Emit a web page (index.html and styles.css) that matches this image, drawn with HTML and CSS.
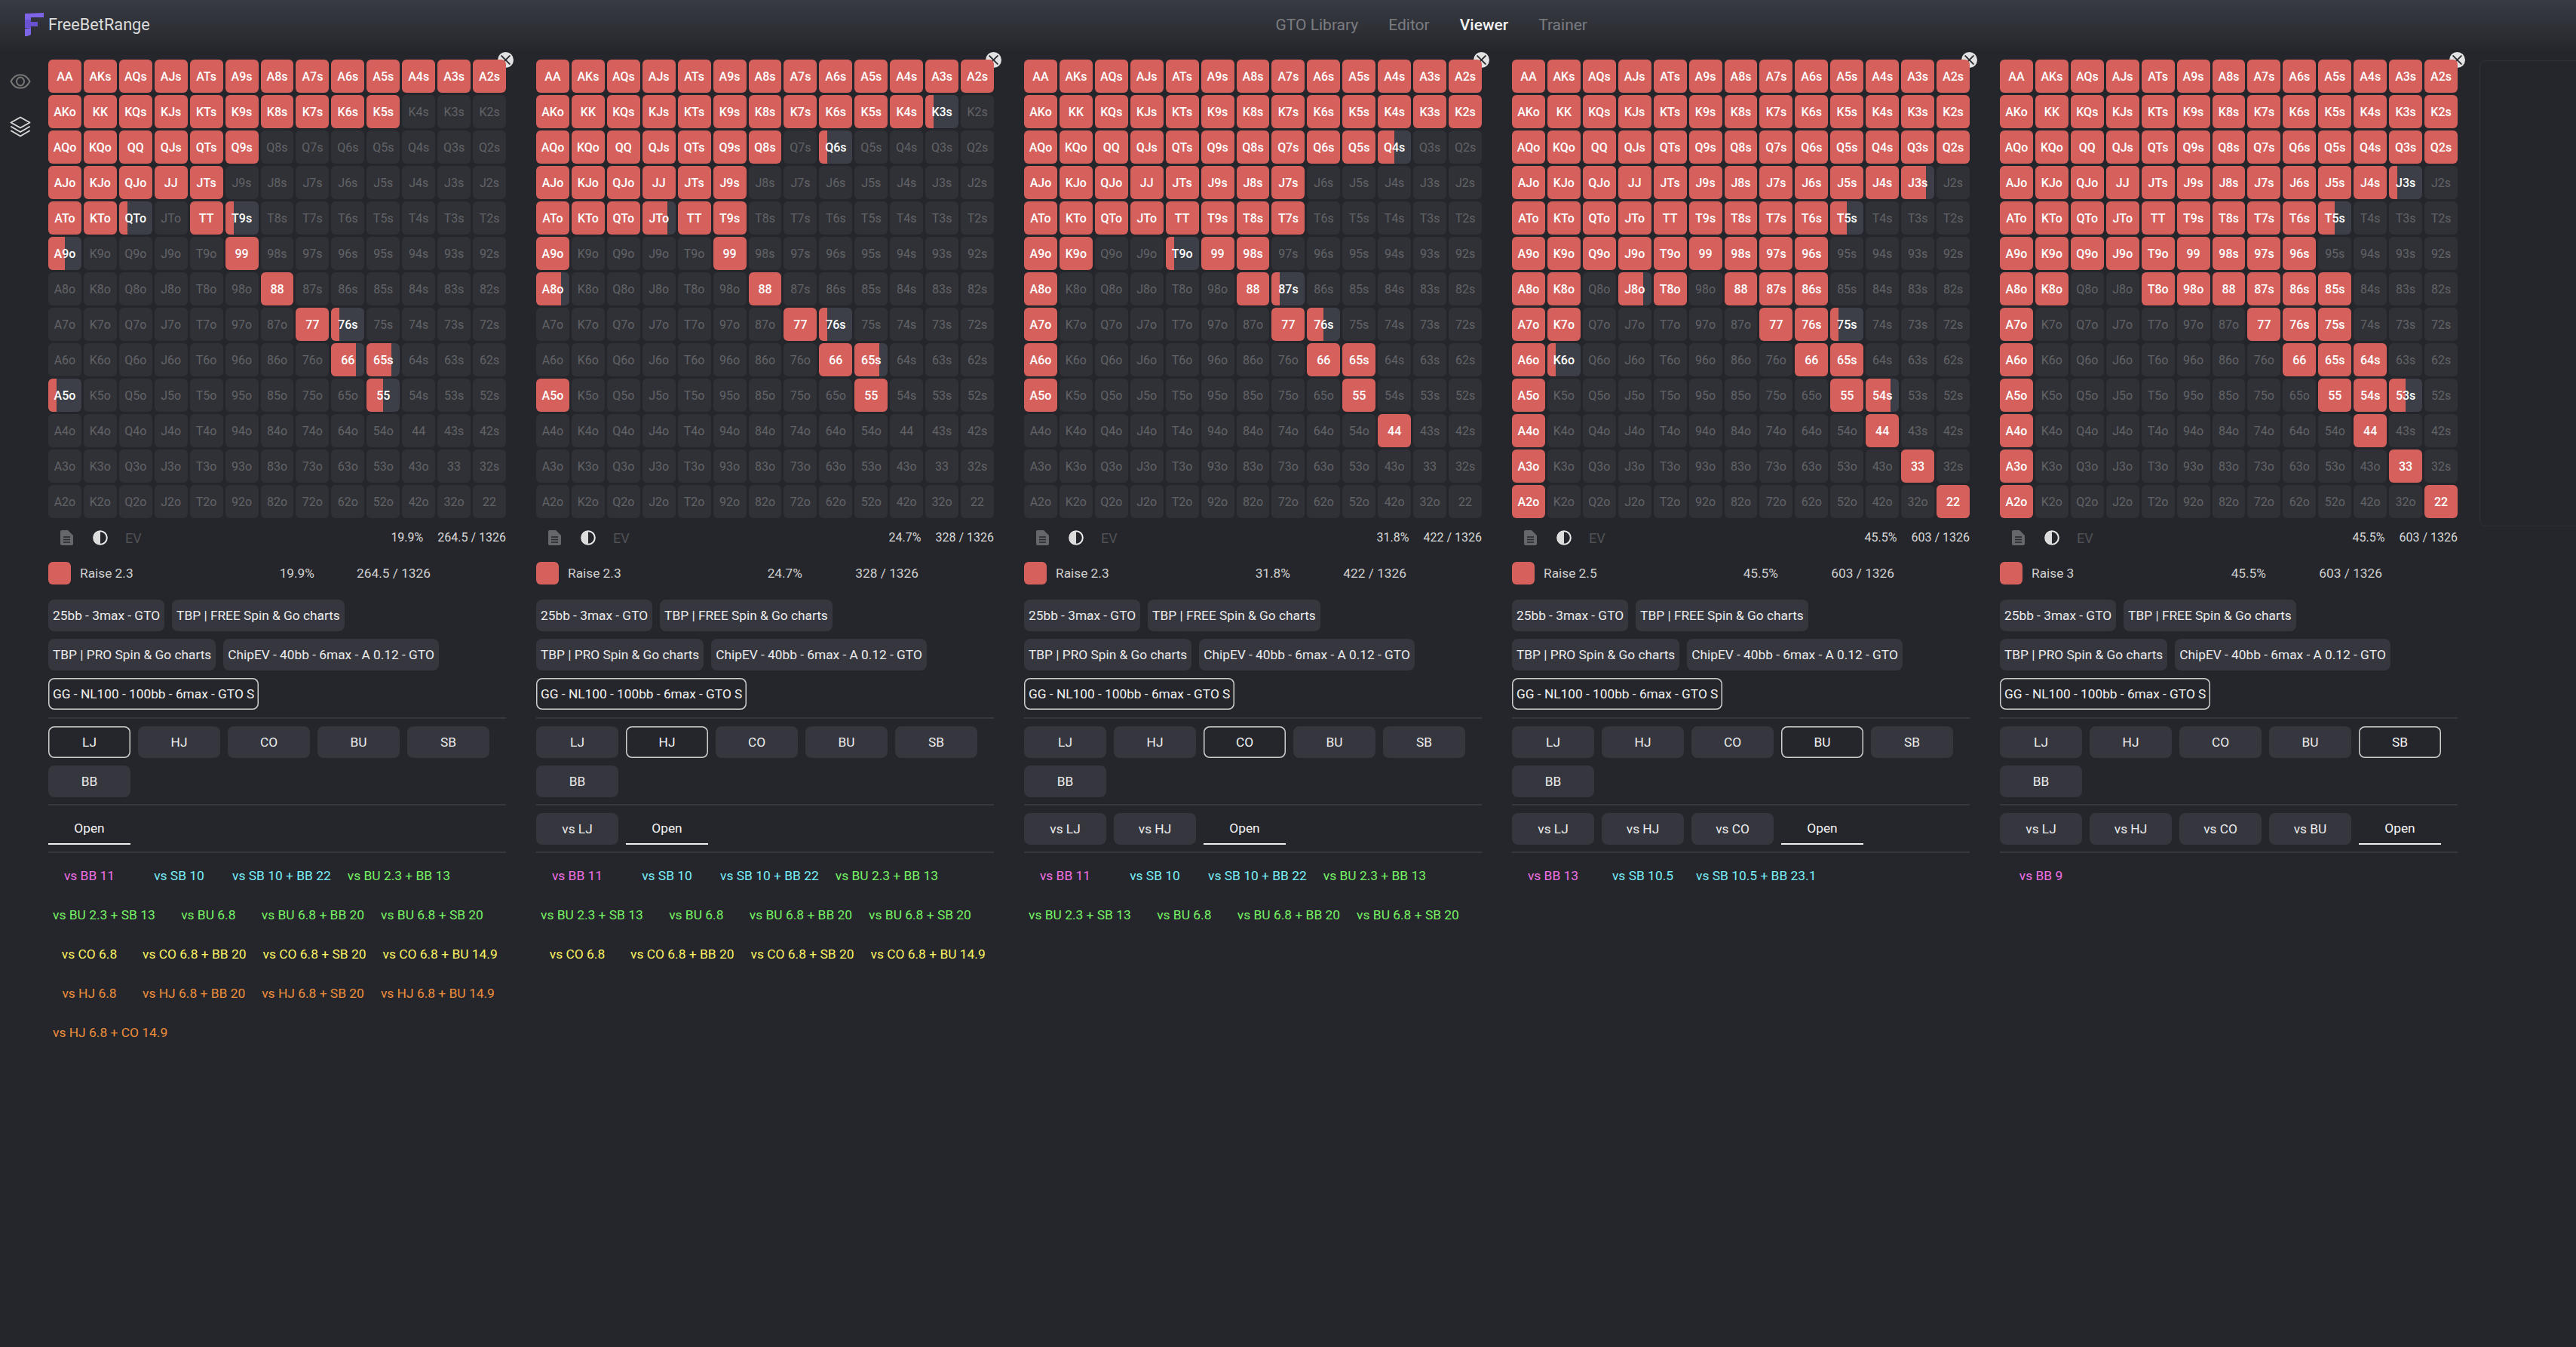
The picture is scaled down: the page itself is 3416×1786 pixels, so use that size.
FILE: index.html
```html
<!DOCTYPE html>
<html lang="en">
<head>
    <meta charset="UTF-8">
    <title>FreeBetRange - Viewer</title>
    <link rel="stylesheet" href="styles.css">
</head>
<body>
    <header class="topbar">
        <div class="brand">
            <svg class="brand-logo" viewBox="0 0 25 31" width="25" height="31">
                <polygon fill="#7d63e6" points="0,1 25,0 25,6 8,6 8,9 0,9"/>
                <polygon fill="#6a51cf" points="0,9 8,9 8,12 17,12 17,18 8,18 8,20 0,20"/>
                <polygon fill="#7d63e6" points="0,21 8,20 8,29 3,31 0,31"/>
            </svg>
            <span class="brand-name">FreeBetRange</span>
        </div>
        <nav class="nav">
            <a class="nav-link">GTO Library</a>
            <a class="nav-link">Editor</a>
            <a class="nav-link active">Viewer</a>
            <a class="nav-link">Trainer</a>
        </nav>
    </header>

    <div class="layout">
        <aside class="sidebar">
            <svg class="side-icon eye" viewBox="0 0 28 20" width="28" height="20" fill="none" stroke="#777" stroke-width="2">
                <path d="M1.5 10C4.5 4 9 1.2 14 1.2S23.500 4 26.500 10C23.500 16 19 18.800 14 18.800S4.500 16 1.500 10Z"/>
                <ellipse cx="14" cy="10" rx="5" ry="5.500"/>
            </svg>
            <svg class="side-icon layers" viewBox="0 0 28 28" width="28" height="28" fill="none" stroke="#d8d8d8" stroke-width="2" stroke-linejoin="round" stroke-linecap="round">
                <path d="M14 1.500L26.500 8.500L14 15.500L1.500 8.500Z"/>
                <path d="M2 14L14 21L26 14"/>
                <path d="M2 19.500L14 26.500L26 19.500"/>
            </svg>
        </aside>
        <main class="boards" id="boards"></main>
        <div class="side-box"></div>
    </div>

    <script src="app.js"></script>
</body>
</html>
```

FILE: styles.css
```css
* {
    box-sizing: border-box;
}
html, body {
    margin: 0;
    height: 100%;
    overflow: hidden;
}
body {
    background: #25262b;
    color: #e6e6e6;
    font-family: Roboto, "Noto Sans", sans-serif;
    font-size: 16px;
}

.topbar {
    height: 65px;
    display: flex;
    align-items: center;
    padding-left: 33px;
    background: linear-gradient(180deg, #383b44 0%, #27282d 100%);
}
.brand {
    display: flex;
    align-items: center;
    gap: 6px;
}
.brand-name {
    font-size: 21.700px;
    color: #dcdcdc;
}
.nav {
    display: flex;
    gap: 40px;
    margin-left: auto;
    margin-right: 1311px;
    font-size: 21px;
}
.nav-link {
    color: #7b7c80;
}
.nav-link.active {
    color: #f2f2f2;
    font-weight: 500;
}

.layout {
    display: flex;
    align-items: flex-start;
}
.sidebar {
    width: 64px;
    flex: none;
    display: flex;
    flex-direction: column;
    align-items: flex-start;
    padding: 33px 0 0 13px;
    gap: 36px;
}
.side-icon {
    display: block;
}
.boards {
    display: flex;
    gap: 40px;
    padding-top: 14px;
    flex: none;
}
.side-box {
    flex: none;
    width: 400px;
    height: 618px;
    margin: 15px 0 0 29px;
    border: 1px solid #303136;
    border-radius: 8px;
}

.panel {
    position: relative;
    width: 607px;
    flex: none;
}
.close {
    position: absolute;
    top: -12px;
    right: -12px;
    width: 25px;
    height: 25px;
    border-radius: 50%;
    background: #e2e2e2;
    border: 2px solid #25262b;
    display: flex;
    align-items: center;
    justify-content: center;
}

.grid {
    display: grid;
    grid-template-columns: repeat(13, 1fr);
    grid-template-rows: repeat(13, 44px);
    gap: 3px;
}
.cell {
    position: relative;
    overflow: hidden;
    border-radius: 6px;
    background: #303136;
    color: #626367;
    display: flex;
    align-items: center;
    justify-content: center;
}
.cell.on {
    background: #d5605c;
    color: #fff;
    font-weight: 500;
}
.cell.part {
    background: #3c3f47;
    color: #fff;
    font-weight: 500;
}
.cell-fill {
    position: absolute;
    left: 0;
    top: 0;
    bottom: 0;
    background: #d5605c;
}
.cell-text {
    position: relative;
}

.stats {
    height: 24px;
    margin-top: 14px;
    display: flex;
    align-items: center;
    padding-left: 15px;
}
.stats-doc {
    margin-right: 26px;
}
.stats-half {
    margin-right: 23px;
}
.stats-ev {
    font-size: 18px;
    color: #505155;
}
.stats-num {
    margin-left: auto;
    display: flex;
    gap: 19px;
    color: #d8d8d8;
    margin-top: -2px;
}

.legend {
    width: 507px;
    margin-top: 20px;
    display: grid;
    grid-template-columns: 30px 1fr 100px 154px;
    align-items: center;
    font-size: 17.300px;
    color: #cfcfcf;
}
.legend-swatch {
    width: 30px;
    height: 30px;
    border-radius: 6px;
    background: #d5605c;
}
.legend-label {
    padding-left: 12px;
}
.legend-num {
    text-align: right;
}

.chips {
    display: flex;
    flex-wrap: wrap;
    gap: 10px;
    font-size: 17.300px;
}
.chips-top {
    margin-top: 20px;
}
.chip {
    height: 42px;
    padding: 0 6px;
    display: flex;
    align-items: center;
    justify-content: center;
    background: #35363e;
    border-radius: 8px;
    color: #ececec;
    white-space: nowrap;
}
.chip.wide {
    width: 109px;
}
.chip.selected {
    background: transparent;
    box-shadow: inset 0 0 0 1.500px #cfcfcf;
    color: #f2f2f2;
}
.tab-open {
    background: transparent;
    border-radius: 0;
    border-bottom: 2px solid #f0f0f0;
    color: #f4f4f4;
}

.rule {
    height: 2px;
    background: #37383d;
}
.rule-a {
    margin: 10px 0;
}
.rule-b {
    margin: 9px 0 10px;
}
.rule-c {
    margin: 9px 0;
}

.spots {
    display: flex;
    flex-wrap: wrap;
    gap: 10px;
    font-size: 17.400px;
}
.spot {
    height: 42px;
    min-width: 109px;
    padding: 0 6px;
    display: flex;
    align-items: center;
    justify-content: center;
    white-space: nowrap;
}
.pink {
    color: #ee70e4;
}
.cyan {
    color: #78eef8;
}
.green {
    color: #76f265;
}
.yellow {
    color: #fbf264;
}
.orange {
    color: #ee8e3c;
}
```

FILE: app.js
```js
const RANKS = 'AKQJT98765432';
const FULL = '#############';
const NONE = '.............';

// # = full, . = empty, 1/2/3 = quarters of the hand in range
const PANELS = [
    {
        pct: '19.9%', combos: '264.5 / 1326', raise: 'Raise 2.3', pos: 0, tabs: [],
        spots: 17,
        rows: [
            FULL,
            '##########...',
            '######.......',
            '#####........',
            '##1.#1.......',
            '2....#.......',
            '......#......',
            '.......#1....',
            '........33...',
            '1........2...',
            NONE, NONE, NONE
        ]
    },
    {
        pct: '24.7%', combos: '328 / 1326', raise: 'Raise 2.3', pos: 1, tabs: ['vs LJ'],
        spots: 12,
        rows: [
            FULL,
            '###########1.',
            '#######.1....',
            '######.......',
            '###3##.......',
            '#....#.......',
            '3.....#......',
            '.......#1....',
            '........#3...',
            '#........#...',
            NONE, NONE, NONE
        ]
    },
    {
        pct: '31.8%', combos: '422 / 1326', raise: 'Raise 2.3', pos: 2, tabs: ['vs LJ', 'vs HJ'],
        spots: 8,
        rows: [
            FULL,
            FULL,
            '##########2..',
            '########.....',
            '########.....',
            '##..1##......',
            '#.....#1.....',
            '#......#2....',
            '#.......##...',
            '#........#...',
            '..........#..',
            NONE, NONE
        ]
    },
    {
        pct: '45.5%', combos: '603 / 1326', raise: 'Raise 2.5', pos: 3, tabs: ['vs LJ', 'vs HJ', 'vs CO'],
        spotList: [['vs BB 13', 'pink'], ['vs SB 10.5', 'cyan'], ['vs SB 10.5 + BB 23.1', 'cyan']],
        rows: [
            FULL,
            FULL,
            FULL,
            '###########3.',
            '#########2...',
            '#########....',
            '##.3#.###....',
            '##.....##1...',
            '#1......##...',
            '#........#3..',
            '#.........#..',
            '#..........#.',
            '#...........#'
        ]
    },
    {
        pct: '45.5%', combos: '603 / 1326', raise: 'Raise 3', pos: 4, tabs: ['vs LJ', 'vs HJ', 'vs CO', 'vs BU'],
        spotList: [['vs BB 9', 'pink']],
        rows: [
            FULL,
            FULL,
            FULL,
            '###########1.',
            '#########2...',
            '#########....',
            '##..######...',
            '#......###...',
            '#.......###..',
            '#........##2.',
            '#.........#..',
            '#..........#.',
            '#...........#'
        ]
    }
];

const CHARTS = [
    '25bb - 3max - GTO',
    'TBP | FREE Spin & Go charts',
    'TBP | PRO Spin & Go charts',
    'ChipEV - 40bb - 6max - A 0.12 - GTO',
    'GG - NL100 - 100bb - 6max - GTO S'
];
const POSITIONS = ['LJ', 'HJ', 'CO', 'BU', 'SB', 'BB'];

const SPOTS = [
    ['vs BB 11', 'pink'], ['vs SB 10', 'cyan'], ['vs SB 10 + BB 22', 'cyan'], ['vs BU 2.3 + BB 13', 'green'],
    ['vs BU 2.3 + SB 13', 'green'], ['vs BU 6.8', 'green'], ['vs BU 6.8 + BB 20', 'green'], ['vs BU 6.8 + SB 20', 'green'],
    ['vs CO 6.8', 'yellow'], ['vs CO 6.8 + BB 20', 'yellow'], ['vs CO 6.8 + SB 20', 'yellow'], ['vs CO 6.8 + BU 14.9', 'yellow'],
    ['vs HJ 6.8', 'orange'], ['vs HJ 6.8 + BB 20', 'orange'], ['vs HJ 6.8 + SB 20', 'orange'], ['vs HJ 6.8 + BU 14.9', 'orange'],
    ['vs HJ 6.8 + CO 14.9', 'orange']
];

function handName(i, j) {
    if (i === j) return RANKS[i] + RANKS[j];
    if (j > i) return RANKS[i] + RANKS[j] + 's';
    return RANKS[j] + RANKS[i] + 'o';
}

function gridHtml(rows) {
    let html = '';
    rows.forEach((row, i) => {
        [...row].forEach((mark, j) => {
            const name = handName(i, j);
            if (mark === '#') {
                html += `<div class="cell on"><span class="cell-text">${name}</span></div>`;
            } else if (mark === '.') {
                html += `<div class="cell"><span class="cell-text">${name}</span></div>`;
            } else {
                const width = Number(mark) * 25;
                html += `<div class="cell part"><div class="cell-fill" style="width: ${width}%"></div><span class="cell-text">${name}</span></div>`;
            }
        });
    });
    return html;
}

function panelHtml(panel) {
    const charts = CHARTS.map((name, i) =>
        `<div class="chip${i === 4 ? ' selected' : ''}">${name.replace('&', '&amp;')}</div>`).join('');
    const positions = POSITIONS.map((name, i) =>
        `<div class="chip wide${i === panel.pos ? ' selected' : ''}">${name}</div>`).join('');
    const tabs = panel.tabs.map(name => `<div class="chip wide">${name}</div>`).join('');
    const list = panel.spotList || SPOTS.slice(0, panel.spots);
    const spots = list.map(s => `<div class="spot ${s[1]}">${s[0]}</div>`).join('');

    return `
    <section class="panel">
        <div class="close">
            <svg viewBox="0 0 14 14" width="15" height="15" stroke="#2b2c31" stroke-width="1.800" stroke-linecap="round">
                <path d="M2 2L12 12M12 2L2 12"/>
            </svg>
        </div>
        <div class="grid">${gridHtml(panel.rows)}</div>
        <div class="stats">
            <svg class="stats-doc" viewBox="0 0 18 20" width="18" height="20">
                <path fill="#66676b" d="M3 0H11L18 7V18Q18 20 16 20H3Q1 20 1 18V2Q1 0 3 0Z"/>
                <path stroke="#25262b" stroke-width="1.500" d="M5 9H14M5 12.500H14M5 16H14"/>
            </svg>
            <svg class="stats-half" viewBox="0 0 20 20" width="20" height="20">
                <circle cx="10" cy="10" r="8.800" fill="none" stroke="#ececec" stroke-width="2"/>
                <path fill="#dcdcdc" d="M10 1A9 9 0 0 0 10 19Z"/>
            </svg>
            <span class="stats-ev">EV</span>
            <div class="stats-num"><span>${panel.pct}</span><span>${panel.combos}</span></div>
        </div>
        <div class="legend">
            <div class="legend-swatch"></div>
            <div class="legend-label">${panel.raise}</div>
            <div class="legend-num">${panel.pct}</div>
            <div class="legend-num">${panel.combos}</div>
        </div>
        <div class="chips chips-top">${charts}</div>
        <div class="rule rule-a"></div>
        <div class="chips">${positions}</div>
        <div class="rule rule-b"></div>
        <div class="chips">${tabs}<div class="chip wide tab-open">Open</div></div>
        <div class="rule rule-c"></div>
        <div class="spots">${spots}</div>
    </section>`;
}

document.getElementById('boards').innerHTML = PANELS.map(panelHtml).join('');
```
